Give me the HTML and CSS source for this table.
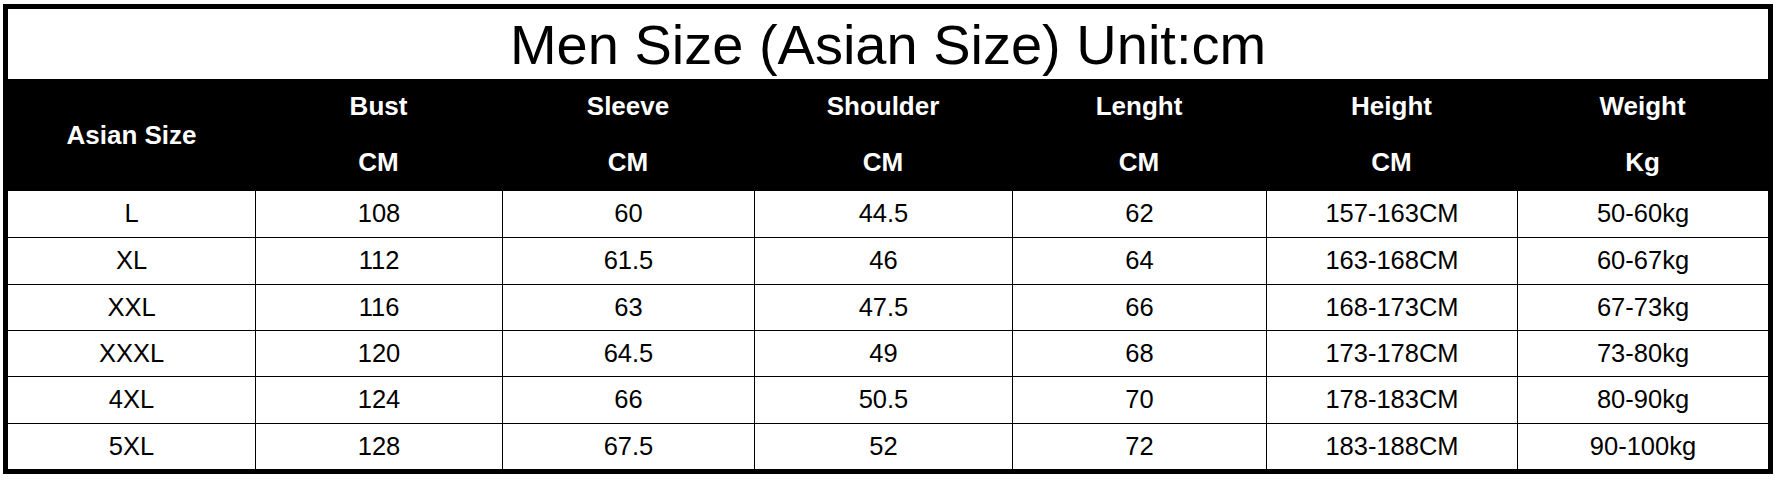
FILE: index.html
```html
<!DOCTYPE html>
<html>
<head>
<meta charset="utf-8">
<link rel="stylesheet" href="styles.css">
</head>
<body>
<div class="chart">
  <div class="title">Men Size (Asian Size) Unit:cm</div>
  <div class="head">
    <div class="hcell single">Asian Size</div>
    <div class="hcell"><span>Bust</span><span>CM</span></div>
    <div class="hcell"><span>Sleeve</span><span>CM</span></div>
    <div class="hcell"><span>Shoulder</span><span>CM</span></div>
    <div class="hcell"><span>Lenght</span><span>CM</span></div>
    <div class="hcell"><span>Height</span><span>CM</span></div>
    <div class="hcell"><span>Weight</span><span>Kg</span></div>
  </div>
  <div class="body">
    <div class="row"><div class="cell">L</div><div class="cell">108</div><div class="cell">60</div><div class="cell">44.5</div><div class="cell">62</div><div class="cell">157-163CM</div><div class="cell">50-60kg</div></div>
    <div class="row"><div class="cell">XL</div><div class="cell">112</div><div class="cell">61.5</div><div class="cell">46</div><div class="cell">64</div><div class="cell">163-168CM</div><div class="cell">60-67kg</div></div>
    <div class="row"><div class="cell">XXL</div><div class="cell">116</div><div class="cell">63</div><div class="cell">47.5</div><div class="cell">66</div><div class="cell">168-173CM</div><div class="cell">67-73kg</div></div>
    <div class="row"><div class="cell">XXXL</div><div class="cell">120</div><div class="cell">64.5</div><div class="cell">49</div><div class="cell">68</div><div class="cell">173-178CM</div><div class="cell">73-80kg</div></div>
    <div class="row"><div class="cell">4XL</div><div class="cell">124</div><div class="cell">66</div><div class="cell">50.5</div><div class="cell">70</div><div class="cell">178-183CM</div><div class="cell">80-90kg</div></div>
    <div class="row"><div class="cell">5XL</div><div class="cell">128</div><div class="cell">67.5</div><div class="cell">52</div><div class="cell">72</div><div class="cell">183-188CM</div><div class="cell">90-100kg</div></div>
  </div>
</div>
</body>
</html>
```
FILE: styles.css
```css
html, body {
  margin: 0;
  padding: 0;
  background: #ffffff;
}
body {
  padding: 4px 0 0 3px;
  font-family: "Liberation Sans", Arial, sans-serif;
  color: #000;
}
.chart {
  width: 1760px;
  height: 460px;
  border: 5px solid #000;
  display: flex;
  flex-direction: column;
  background: #fff;
}
.title {
  height: 70px;
  display: flex;
  align-items: center;
  justify-content: center;
  font-size: 56px;
  line-height: 1;
  padding-top: 1px;
  box-sizing: border-box;
}
.head, .row {
  display: grid;
  grid-template-columns: 247px 247px 252px 258px 254px 251px 251px;
}
.head {
  height: 112px;
  background: #000;
  color: #fff;
  font-weight: bold;
  font-size: 26px;
}
.hcell {
  display: grid;
  grid-template-rows: 1fr 1fr;
  align-items: center;
  justify-items: center;
  line-height: 1;
}
.hcell span {
  margin-top: -3px;
}
.hcell.single {
  display: flex;
  align-items: center;
  justify-content: center;
}
.body {
  flex: 1;
  display: grid;
  grid-template-rows: repeat(6, 1fr);
}
.row + .row {
  border-top: 1px solid #000;
}
.cell {
  display: flex;
  align-items: center;
  justify-content: center;
  font-size: 25.5px;
  line-height: 1;
}
.cell + .cell {
  border-left: 1px solid #000;
}
```
